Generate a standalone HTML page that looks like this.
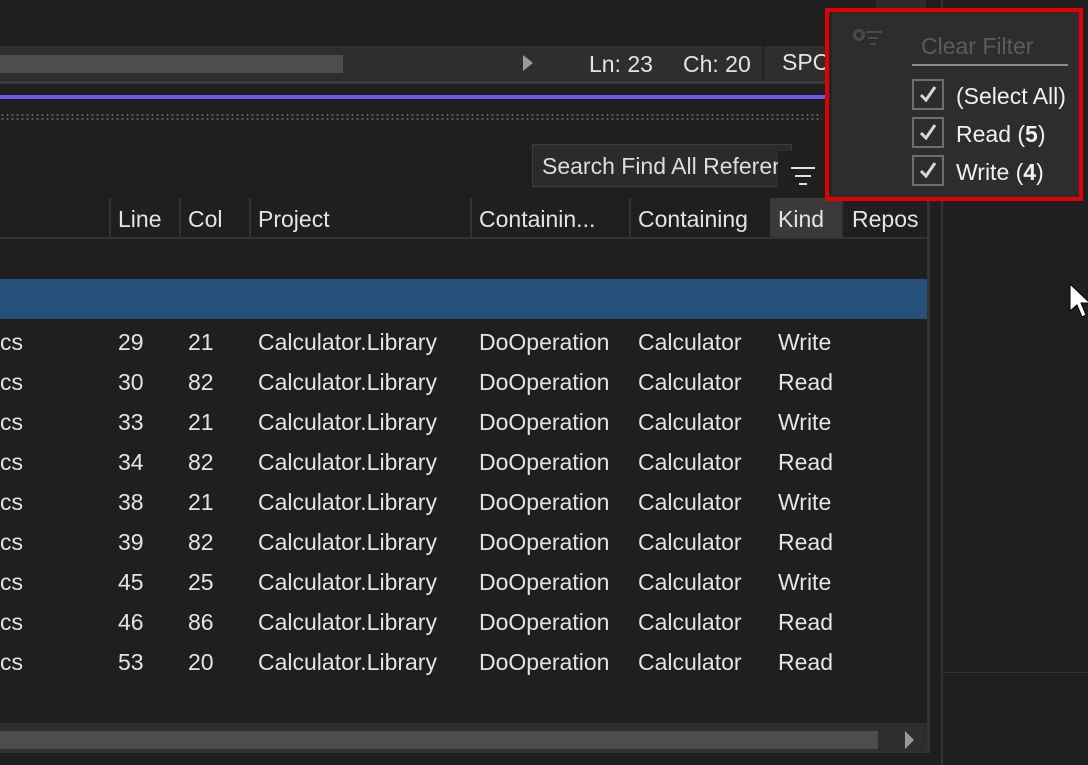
<!DOCTYPE html>
<html><head><style>
*{margin:0;padding:0;box-sizing:border-box}
body{width:1088px;height:765px;background:#1f1f1f;overflow:hidden;position:relative;font-family:"Liberation Sans",sans-serif;color:#e4e4e4;font-size:23px}
.a{position:absolute}
.row{position:absolute;left:0;width:927px;height:40px;line-height:42px}
.row span{position:absolute;top:0;white-space:nowrap}
.hd span{position:absolute;top:0;line-height:42px;white-space:nowrap}
.sep{position:absolute;top:198px;width:2px;height:40px;background:#333}
.cb{position:absolute;left:912px;width:32px;height:31px;border:2px solid #6e6e6e}
.cb svg{position:absolute;left:4px;top:3px}
.lbl{position:absolute;left:956px;font-size:23px;color:#f0f0f0}
</style></head><body>
<div class="a" style="left:0;top:46px;width:930px;height:35px;background:#2e2e2e"></div>
<div class="a" style="left:0;top:55px;width:343px;height:18px;background:#4d4d4d"></div>
<svg class="a" style="left:523px;top:55px" width="12" height="16"><path d="M0 0L10 8L0 16Z" fill="#9a9a9a"/></svg>
<div class="a" style="left:589px;top:50px;line-height:28px">Ln: 23</div>
<div class="a" style="left:683px;top:50px;line-height:28px">Ch: 20</div>
<div class="a" style="left:762px;top:46px;width:70px;height:35px;border-left:2px solid #1f1f1f;padding-left:18px;line-height:33px">SPC</div>
<div class="a" style="left:0;top:81px;width:930px;height:3px;background:#3a3a3a"></div>
<div class="a" style="left:0;top:95px;width:830px;height:4px;background:#6b5ce7"></div>
<div class="a" style="left:0;top:113px;width:822px;height:8px;background-image:radial-gradient(circle,#5a5a5a 1px,transparent 1.3px);background-size:5px 4px"></div>
<div class="a" style="left:532px;top:144px;width:260px;height:43px;background:#2b2b2b;border:1px solid #3c3c3c;padding-left:9px;line-height:43px;color:#dcdcdc;white-space:nowrap;overflow:hidden">Search Find All References</div>
<div class="a" style="left:778px;top:151px;width:50px;height:47px;background:#1f1f1f"></div>
<svg class="a" style="left:790px;top:166px" width="26" height="22"><path d="M1 2H25M5 10H21M9 18H17" stroke="#e0e0e0" stroke-width="2"/></svg>
<div class="a" style="left:770px;top:198px;width:72px;height:40px;background:#3a3a3a"></div>
<div class="a" style="left:0;top:237px;width:927px;height:2px;background:#333"></div>
<div class="sep" style="left:109px"></div><div class="sep" style="left:179px"></div><div class="sep" style="left:249px"></div><div class="sep" style="left:470px"></div><div class="sep" style="left:629px"></div><div class="sep" style="left:841px"></div>
<div class="a hd" style="left:0;top:198px;width:927px;height:40px;overflow:hidden">
<span style="left:118px">Line</span><span style="left:188px">Col</span><span style="left:258px">Project</span><span style="left:479px">Containin...</span><span style="left:638px">Containing</span><span style="left:778px">Kind</span><span style="left:852px">Repos</span></div>
<div class="a" style="left:0;top:279px;width:927px;height:40px;background:#26507a"></div>
<div class="row" style="top:321px"><span style="left:0">cs</span><span style="left:118px">29</span><span style="left:188px">21</span><span style="left:258px">Calculator.Library</span><span style="left:479px">DoOperation</span><span style="left:638px">Calculator</span><span style="left:778px">Write</span></div>
<div class="row" style="top:361px"><span style="left:0">cs</span><span style="left:118px">30</span><span style="left:188px">82</span><span style="left:258px">Calculator.Library</span><span style="left:479px">DoOperation</span><span style="left:638px">Calculator</span><span style="left:778px">Read</span></div>
<div class="row" style="top:401px"><span style="left:0">cs</span><span style="left:118px">33</span><span style="left:188px">21</span><span style="left:258px">Calculator.Library</span><span style="left:479px">DoOperation</span><span style="left:638px">Calculator</span><span style="left:778px">Write</span></div>
<div class="row" style="top:441px"><span style="left:0">cs</span><span style="left:118px">34</span><span style="left:188px">82</span><span style="left:258px">Calculator.Library</span><span style="left:479px">DoOperation</span><span style="left:638px">Calculator</span><span style="left:778px">Read</span></div>
<div class="row" style="top:481px"><span style="left:0">cs</span><span style="left:118px">38</span><span style="left:188px">21</span><span style="left:258px">Calculator.Library</span><span style="left:479px">DoOperation</span><span style="left:638px">Calculator</span><span style="left:778px">Write</span></div>
<div class="row" style="top:521px"><span style="left:0">cs</span><span style="left:118px">39</span><span style="left:188px">82</span><span style="left:258px">Calculator.Library</span><span style="left:479px">DoOperation</span><span style="left:638px">Calculator</span><span style="left:778px">Read</span></div>
<div class="row" style="top:561px"><span style="left:0">cs</span><span style="left:118px">45</span><span style="left:188px">25</span><span style="left:258px">Calculator.Library</span><span style="left:479px">DoOperation</span><span style="left:638px">Calculator</span><span style="left:778px">Write</span></div>
<div class="row" style="top:601px"><span style="left:0">cs</span><span style="left:118px">46</span><span style="left:188px">86</span><span style="left:258px">Calculator.Library</span><span style="left:479px">DoOperation</span><span style="left:638px">Calculator</span><span style="left:778px">Read</span></div>
<div class="row" style="top:641px"><span style="left:0">cs</span><span style="left:118px">53</span><span style="left:188px">20</span><span style="left:258px">Calculator.Library</span><span style="left:479px">DoOperation</span><span style="left:638px">Calculator</span><span style="left:778px">Read</span></div>
<div class="a" style="left:0;top:723px;width:928px;height:28px;background:#2e2e2e"></div>
<div class="a" style="left:0;top:731px;width:878px;height:18px;background:#4d4d4d"></div>
<svg class="a" style="left:905px;top:731px" width="10" height="18"><path d="M0 0L9 9L0 18Z" fill="#9a9a9a"/></svg>
<div class="a" style="left:0;top:751px;width:930px;height:2px;background:#333"></div>
<div class="a" style="left:927px;top:82px;width:3px;height:671px;background:#333"></div>
<div class="a" style="left:941px;top:0;width:2px;height:765px;background:#333"></div>
<div class="a" style="left:943px;top:672px;width:145px;height:1px;background:#333"></div>
<div class="a" style="left:876px;top:0;width:50px;height:12px;background:#2b2b2b"></div>
<div class="a" style="left:825px;top:8px;width:258px;height:193px;border:4px solid #e00000;background:#2d2d2d"></div>
<div class="a" style="left:829px;top:12px;width:3px;height:185px;background:#262626"></div>
<svg class="a" style="left:852px;top:28px" width="32" height="26"><circle cx="7" cy="7" r="6" fill="#4a4a4a"/><circle cx="7" cy="7" r="3" fill="#2d2d2d"/><path d="M14 4H30M16 10H26M18 16H24" stroke="#4a4a4a" stroke-width="2"/></svg>
<div class="a" style="left:921px;top:31px;font-size:23px;color:#5c5c5c;line-height:30px">Clear Filter</div>
<div class="a" style="left:912px;top:64px;width:156px;height:2px;background:#8a8a8a"></div>
<div class="cb" style="top:79px"><svg width="20" height="20"><path d="M3 11L8 16L17 3" stroke="#d8d8d8" stroke-width="3" fill="none"/></svg></div>
<div class="cb" style="top:117px"><svg width="20" height="20"><path d="M3 11L8 16L17 3" stroke="#d8d8d8" stroke-width="3" fill="none"/></svg></div>
<div class="cb" style="top:155px"><svg width="20" height="20"><path d="M3 11L8 16L17 3" stroke="#d8d8d8" stroke-width="3" fill="none"/></svg></div>
<div class="lbl" style="top:83px">(Select All)</div>
<div class="lbl" style="top:121px">Read (<b>5</b>)</div>
<div class="lbl" style="top:159px">Write (<b>4</b>)</div>
<svg class="a" style="left:1069px;top:283px" width="20" height="36"><path d="M1 1V28L8 22L13 34L17 32L12 20H21Z" fill="#fff" stroke="#000" stroke-width="1"/></svg>
</body></html>
